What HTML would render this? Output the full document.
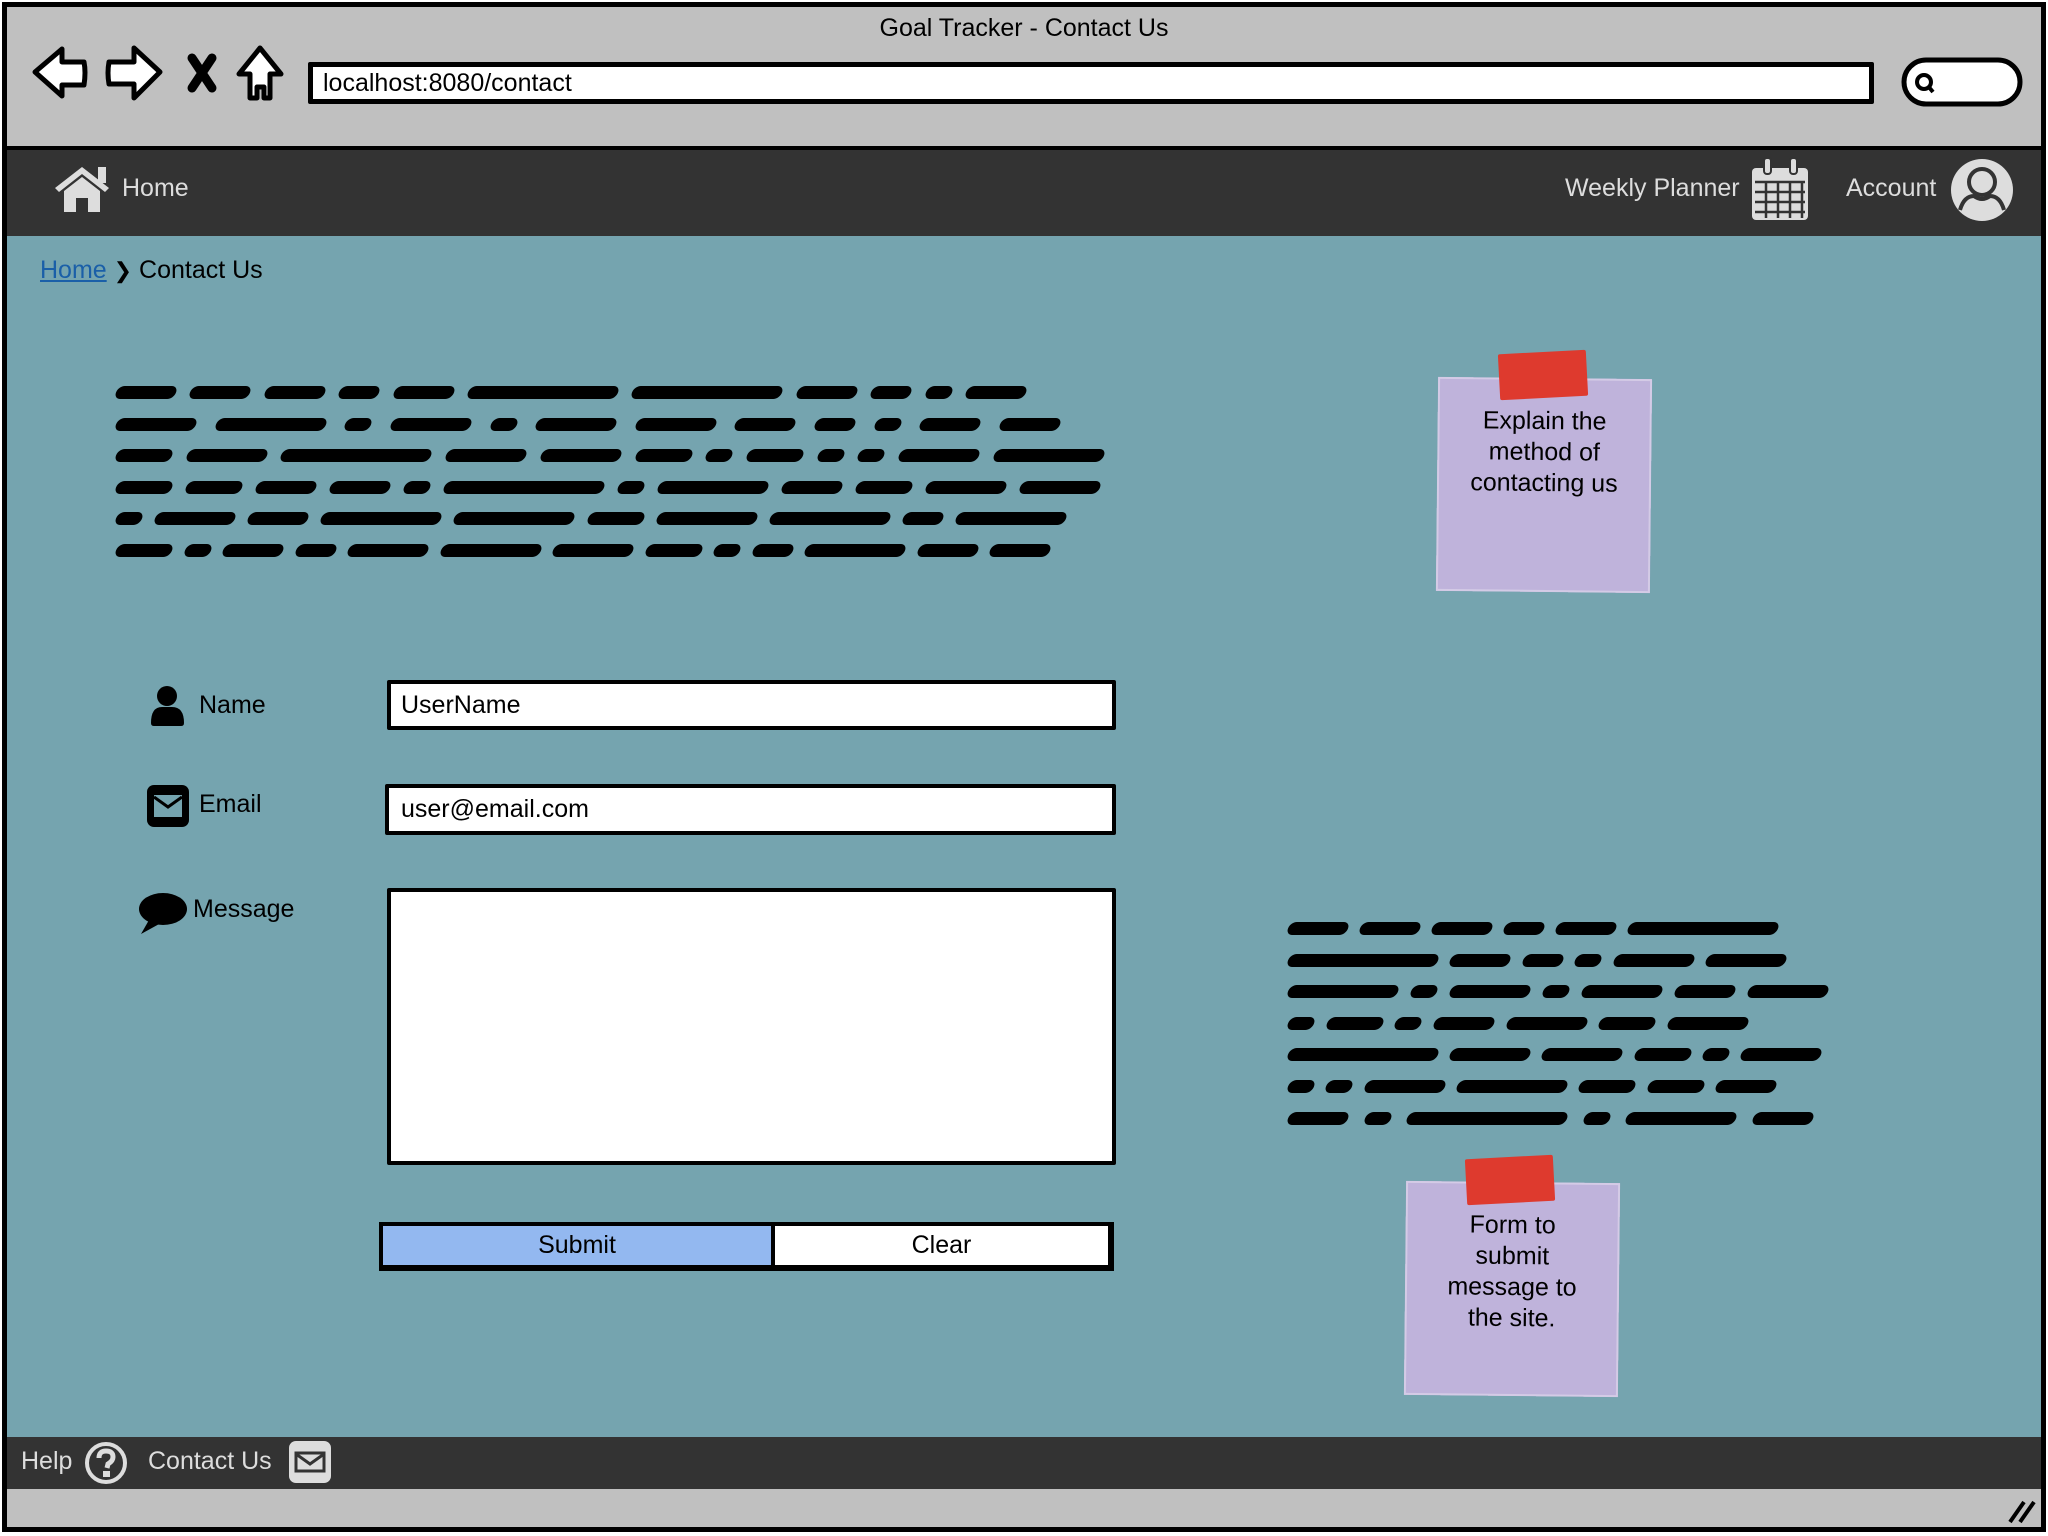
<!DOCTYPE html>
<html><head><meta charset="utf-8">
<style>
*{box-sizing:border-box;margin:0;padding:0}
body{width:2048px;height:1536px;position:relative;overflow:hidden;background:#fff;font-family:"Liberation Sans",sans-serif}
.abs{position:absolute}
.frame{left:2px;top:2px;width:2044px;height:1530px;border:5px solid #000;background:#c0c0c0}
.nav{left:7px;top:146px;width:2034px;height:90px;background:#333;border-top:4px solid #000}
.content{left:7px;top:236px;width:2034px;height:1201px;background:#75a4af}
.foot{left:7px;top:1437px;width:2034px;height:52px;background:#333}
.lines{display:flex;justify-content:space-between;height:14px}
.lines span{display:block;height:13px;background:#000;border-radius:7px;transform:skewX(-20deg)}
.input{background:#fff;border:4px solid #000;border-radius:2px;font-size:25px;padding-left:10px;display:flex;align-items:center}
.lbl{font-size:25px;color:#000}
.sticky{background:#bfb3db;font-size:25px;text-align:center;line-height:31px;color:#000;box-shadow:0 0 0 2px #d4cbe6 inset}
.tape{background:#de3a2e;border-radius:2px}
.navt{color:#ddd;font-size:25px}
</style></head><body>
<div class="abs frame"></div>
<div class="abs" style="left:0;top:14px;width:2048px;text-align:center;font-size:25px;color:#000">Goal Tracker - Contact Us</div>
<svg class="abs" style="left:0;top:0" width="300" height="110">
<g fill="#fff" stroke="#000" stroke-width="5" stroke-linejoin="round">
<path d="M35 72 L62 49 L62 62 L84 62 Q86 72 84 85 L62 85 L62 96 Z"/>
<path d="M160 72 L134 48 L134 62 L109 62 Q107 73 109 84 L134 84 L134 98 Z"/>
<path d="M260 48 L281 74 L270 74 L270 98 L264 98 L264 87 L257 87 L257 98 L250 98 L250 74 L239 74 Z"/>
</g>
<path d="M192 58 L212 88 M212 58 L192 88" stroke="#000" stroke-width="9" stroke-linecap="round"/>
</svg>
<div class="abs input" style="left:308px;top:62px;width:1566px;height:42px;border-width:5px;font-size:25px;padding-left:10px">localhost:8080/contact</div>
<svg class="abs" style="left:1900px;top:56px" width="126" height="54"><rect x="4" y="4" width="116" height="44" rx="22" fill="#fff" stroke="#000" stroke-width="5"/><circle cx="24" cy="26" r="7" fill="none" stroke="#000" stroke-width="4"/><path d="M28 30 L33 36" stroke="#000" stroke-width="4"/></svg>

<div class="abs nav"></div>
<svg class="abs" style="left:52px;top:165px" width="64" height="50" viewBox="0 0 64 50"><path d="M3 23 L30 2 L57 23 L53 27 L30 9 L7 27 Z" fill="#ddd"/><rect x="46" y="2" width="8" height="16" fill="#ddd"/><path d="M12 26 L30 12 L48 26 L48 47 L36 47 L36 33 L24 33 L24 47 L12 47 Z" fill="#ddd"/></svg>
<div class="abs navt" style="left:122px;top:174px">Home</div>
<div class="abs navt" style="left:1565px;top:174px">Weekly Planner</div>
<svg class="abs" style="left:1750px;top:156px" width="62" height="68" viewBox="0 0 62 68"><rect x="2" y="12" width="56" height="52" rx="4" fill="#ddd"/><rect x="14" y="2" width="7" height="16" rx="3" fill="#ddd" stroke="#333" stroke-width="2"/><rect x="40" y="2" width="7" height="16" rx="3" fill="#ddd" stroke="#333" stroke-width="2"/><g stroke="#333" stroke-width="2.5"><path d="M5 26 H55 M5 36 H55 M5 46 H55 M5 56 H55 M16 26 V62 M28 26 V62 M40 26 V62 M52 26 V62"/></g></svg>
<div class="abs navt" style="left:1846px;top:174px">Account</div>
<svg class="abs" style="left:1950px;top:158px" width="64" height="64" viewBox="0 0 64 64"><circle cx="32" cy="32" r="31" fill="#ddd"/><circle cx="32" cy="24" r="13" fill="none" stroke="#333" stroke-width="4"/><path d="M10 52 Q14 38 24 38 Q32 44 40 38 Q50 38 54 52" fill="none" stroke="#333" stroke-width="4"/></svg>

<div class="abs content"></div>
<div class="abs" style="left:40px;top:256px;font-size:25px"><span style="color:#1a5fa8;text-decoration:underline">Home</span> <span style="font-size:22px">❯</span> Contact Us</div>

<div class="abs" style="left:116px;top:386px">
<div class="lines" style="width:910px;margin-bottom:17.6px"><span style="width:60px"></span><span style="width:60px"></span><span style="width:60px"></span><span style="width:40px"></span><span style="width:60px"></span><span style="width:150px"></span><span style="width:150px"></span><span style="width:60px"></span><span style="width:40px"></span><span style="width:26px"></span><span style="width:60px"></span></div>
<div class="lines" style="width:944px;margin-bottom:17.6px"><span style="width:80px"></span><span style="width:110px"></span><span style="width:26px"></span><span style="width:80px"></span><span style="width:26px"></span><span style="width:80px"></span><span style="width:80px"></span><span style="width:60px"></span><span style="width:40px"></span><span style="width:26px"></span><span style="width:60px"></span><span style="width:60px"></span></div>
<div class="lines" style="width:988px;margin-bottom:17.6px"><span style="width:56px"></span><span style="width:80px"></span><span style="width:150px"></span><span style="width:80px"></span><span style="width:80px"></span><span style="width:56px"></span><span style="width:26px"></span><span style="width:56px"></span><span style="width:26px"></span><span style="width:26px"></span><span style="width:80px"></span><span style="width:110px"></span></div>
<div class="lines" style="width:984px;margin-bottom:17.6px"><span style="width:56px"></span><span style="width:56px"></span><span style="width:60px"></span><span style="width:60px"></span><span style="width:26px"></span><span style="width:160px"></span><span style="width:26px"></span><span style="width:110px"></span><span style="width:60px"></span><span style="width:56px"></span><span style="width:80px"></span><span style="width:80px"></span></div>
<div class="lines" style="width:950px;margin-bottom:17.6px"><span style="width:26px"></span><span style="width:80px"></span><span style="width:60px"></span><span style="width:120px"></span><span style="width:120px"></span><span style="width:56px"></span><span style="width:100px"></span><span style="width:120px"></span><span style="width:40px"></span><span style="width:110px"></span></div>
<div class="lines" style="width:934px"><span style="width:56px"></span><span style="width:26px"></span><span style="width:60px"></span><span style="width:40px"></span><span style="width:80px"></span><span style="width:100px"></span><span style="width:80px"></span><span style="width:56px"></span><span style="width:26px"></span><span style="width:40px"></span><span style="width:100px"></span><span style="width:60px"></span><span style="width:60px"></span></div>
</div>

<div class="abs sticky" style="left:1437px;top:378px;width:214px;height:214px;transform:rotate(0.6deg);padding-top:28px">Explain the<br>method of<br>contacting us</div>
<div class="abs tape" style="left:1499px;top:352px;width:88px;height:46px;transform:rotate(-3deg)"></div>

<svg class="abs" style="left:150px;top:685px" width="35" height="42" viewBox="0 0 35 42"><circle cx="17" cy="11" r="10"/><path d="M1 38 Q1 22 12 22 L22 22 Q34 22 34 38 Q34 41 31 41 L4 41 Q1 41 1 38Z"/></svg>
<div class="abs lbl" style="left:199px;top:691px">Name</div>
<svg class="abs" style="left:147px;top:785px" width="42" height="42" viewBox="0 0 42 42"><rect x="0" y="0" width="42" height="42" rx="7"/><rect x="7" y="10" width="28" height="22" fill="#75a4af"/><path d="M7 12 L21 22 L35 12" stroke="#000" stroke-width="3" fill="none"/></svg>
<div class="abs lbl" style="left:199px;top:790px">Email</div>
<svg class="abs" style="left:137px;top:892px" width="52" height="44" viewBox="0 0 52 44"><ellipse cx="26" cy="17" rx="24" ry="16"/><path d="M12 28 L4 42 L24 31Z"/></svg>
<div class="abs lbl" style="left:193px;top:895px">Message</div>

<div class="abs input" style="left:387px;top:680px;width:729px;height:50px">UserName</div>
<div class="abs input" style="left:385px;top:784px;width:731px;height:51px;padding-left:12px">user@email.com</div>
<div class="abs input" style="left:387px;top:888px;width:729px;height:277px"></div>

<div class="abs" style="left:379px;top:1222px;width:735px;height:49px;border:4px solid #000;border-bottom-width:6px;border-right-width:6px;display:flex;font-size:25px">
<div style="width:392px;background:#93b8f0;border-right:4px solid #000;display:flex;align-items:center;justify-content:center">Submit</div>
<div style="flex:1;background:#fff;display:flex;align-items:center;justify-content:center">Clear</div>
</div>

<div class="abs" style="left:1288px;top:922px">
<div class="lines" style="width:490px;margin-bottom:17.6px"><span style="width:60px"></span><span style="width:60px"></span><span style="width:60px"></span><span style="width:40px"></span><span style="width:60px"></span><span style="width:150px"></span></div>
<div class="lines" style="width:498px;margin-bottom:17.6px"><span style="width:150px"></span><span style="width:60px"></span><span style="width:40px"></span><span style="width:26px"></span><span style="width:80px"></span><span style="width:80px"></span></div>
<div class="lines" style="width:540px;margin-bottom:17.6px"><span style="width:110px"></span><span style="width:26px"></span><span style="width:80px"></span><span style="width:26px"></span><span style="width:80px"></span><span style="width:60px"></span><span style="width:80px"></span></div>
<div class="lines" style="width:460px;margin-bottom:17.6px"><span style="width:26px"></span><span style="width:56px"></span><span style="width:26px"></span><span style="width:60px"></span><span style="width:80px"></span><span style="width:56px"></span><span style="width:80px"></span></div>
<div class="lines" style="width:533px;margin-bottom:17.6px"><span style="width:150px"></span><span style="width:80px"></span><span style="width:80px"></span><span style="width:56px"></span><span style="width:26px"></span><span style="width:80px"></span></div>
<div class="lines" style="width:488px;margin-bottom:17.6px"><span style="width:26px"></span><span style="width:26px"></span><span style="width:80px"></span><span style="width:110px"></span><span style="width:56px"></span><span style="width:56px"></span><span style="width:60px"></span></div>
<div class="lines" style="width:525px"><span style="width:60px"></span><span style="width:26px"></span><span style="width:160px"></span><span style="width:26px"></span><span style="width:110px"></span><span style="width:60px"></span></div>
</div>

<div class="abs sticky" style="left:1405px;top:1182px;width:214px;height:214px;transform:rotate(0.6deg);padding-top:28px">Form to<br>submit<br>message to<br>the site.</div>
<div class="abs tape" style="left:1466px;top:1157px;width:88px;height:46px;transform:rotate(-3deg)"></div>

<div class="abs foot"></div>
<div class="abs navt" style="left:21px;top:1447px">Help</div>
<svg class="abs" style="left:84px;top:1441px" width="44" height="44" viewBox="0 0 44 44"><circle cx="22" cy="22" r="19" fill="none" stroke="#ddd" stroke-width="4"/><path d="M15 17 Q15 10 22 10 Q29 10 29 16 Q29 20 24 23 L23 27" fill="none" stroke="#ddd" stroke-width="5"/><rect x="19" y="30" width="7" height="6" fill="#ddd"/></svg>
<div class="abs navt" style="left:148px;top:1447px">Contact Us</div>
<svg class="abs" style="left:289px;top:1441px" width="42" height="42" viewBox="0 0 42 42"><rect width="42" height="42" rx="7" fill="#ddd"/><rect x="7" y="12" width="28" height="18" fill="none" stroke="#333" stroke-width="3"/><path d="M7 13 L21 23 L35 13" stroke="#333" stroke-width="3" fill="none"/></svg>
<svg class="abs" style="left:2006px;top:1494px" width="32" height="32"><path d="M4 28 L18 8 M14 28 L28 8" stroke="#000" stroke-width="4"/></svg>
</body></html>
